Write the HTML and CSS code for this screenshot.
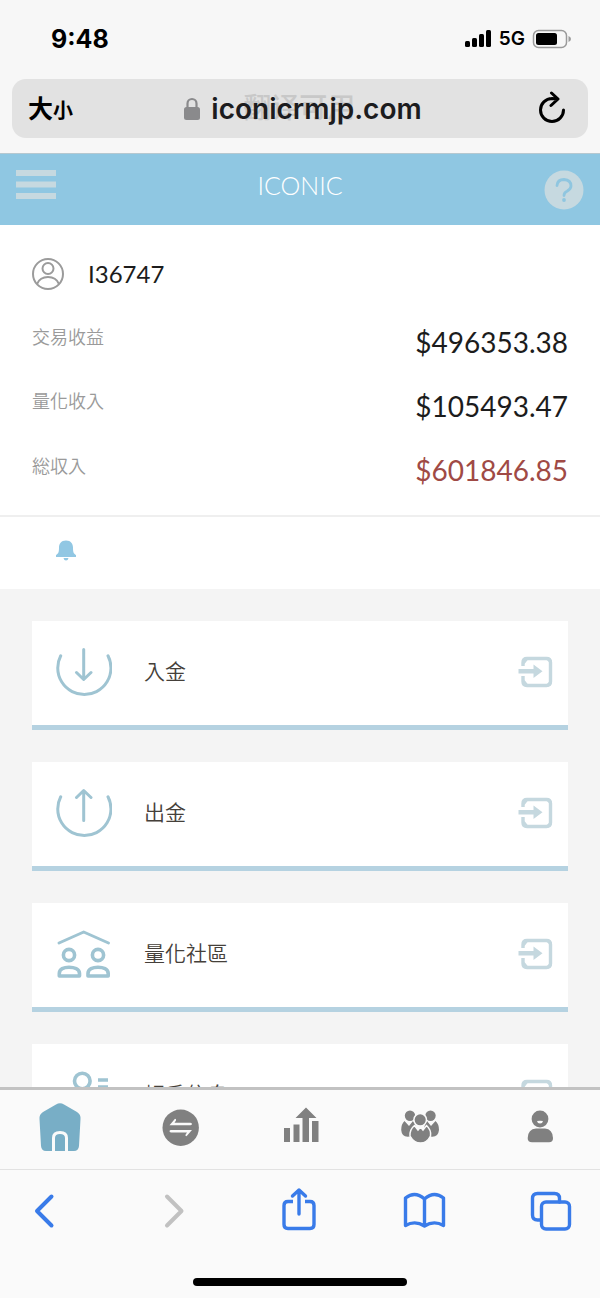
FILE: index.html
```html
<!DOCTYPE html>
<html lang="zh-Hant">
<head>
<meta charset="utf-8">
<meta name="viewport" content="width=device-width, initial-scale=1">
<title>ICONIC</title>
<link rel="stylesheet" href="styles.css">
</head>
<body>
<svg class="defs" aria-hidden="true">
  <symbol id="enter" viewBox="0 0 36 36">
    <path d="M6 11V7.500Q6 3.500 10 3.500H29.500Q33.500 3.500 33.500 7.500V26.500Q33.500 30.500 29.500 30.500H10Q6 30.500 6 26.500V21" fill="none" stroke="currentColor" stroke-width="3.400"/>
    <path d="M5.500 6L9 2H13L7.500 9ZM27 2H31L35 6V10ZM35 24V28L31 32H27ZM13 32H9L5 28L7.500 25Z" fill="currentColor"/>
    <path d="M1.500 14H16.500V9.500L25.500 16.300L16.500 23V18.400H1.500Z" fill="currentColor"/>
  </symbol>
</svg>
<div class="phone">
  <div class="status">
    <span class="clock">9:48</span>
    <div class="signals">
      <svg width="28" height="20" viewBox="0 0 28 20" aria-hidden="true"><rect x="1" y="12" width="5" height="6" rx="1.500"/><rect x="8" y="9" width="5" height="9" rx="1.500"/><rect x="15" y="5" width="5" height="13" rx="1.500"/><rect x="22" y="1" width="5" height="17" rx="1.500"/></svg>
      <span class="network">5G</span>
      <svg width="40" height="20" viewBox="0 0 40 20" aria-hidden="true"><rect x="1.500" y="1.500" width="33" height="17" rx="5" fill="none" stroke="#9a9a9a" stroke-width="1.500"/><rect x="4" y="4" width="21" height="12" rx="2.500"/><path d="M36.500 7Q39 8 39 10Q39 12 36.500 13Z" fill="#9a9a9a"/></svg>
    </div>
  </div>
  <div class="address">
    <button class="text-size" type="button"><span class="big">大</span><span class="small">小</span></button>
    <div class="site">
      <svg width="18" height="24" viewBox="0 0 18 24" aria-hidden="true"><rect x="1" y="10" width="16" height="13" rx="2.500" fill="#8a8a8c"/><path d="M4.500 11V6.500a4.500 4.500 0 0 1 9 0V11" fill="none" stroke="#8a8a8c" stroke-width="2.200"/></svg>
      <span class="domain">iconicrmjp.com<span class="ghost">翻译可用</span></span>
    </div>
    <button class="reload" type="button" aria-label="重新載入"><svg width="32" height="36" viewBox="0 0 32 36"><path d="M16 7.500A11.500 11.500 0 1 0 27.500 19M15.500 2L22 8L15 14.500M21 8L16 7.500" fill="none" stroke="#000" stroke-width="3" stroke-linecap="round" stroke-linejoin="round"/></svg></button>
  </div>

  <header class="app-bar">
    <button type="button" aria-label="選單"><svg width="40" height="30" viewBox="0 0 40 30"><path d="M0 3H40M0 14.500H40M0 26H40" stroke="#c6d9e0" stroke-width="6"/></svg></button>
    <h1>ICONIC</h1>
    <button class="help" type="button" aria-label="說明"><svg width="40" height="40" viewBox="0 0 40 40"><circle cx="20" cy="20" r="19.500" fill="#c6d9e0"/><path d="M13 15.500Q13.500 9.500 20 9.500Q27 10 27 16Q27 19 23 21.200Q20 22.500 20 25.500" fill="none" stroke="#8fc6e0" stroke-width="2.800" stroke-linecap="round"/><circle cx="20" cy="30" r="1.900" fill="#8fc6e0"/></svg></button>
  </header>

  <main>
    <section class="profile">
      <div class="user">
        <svg width="32" height="34" viewBox="0 0 32 34" fill="none" stroke="#9b9b9b" stroke-width="2" aria-hidden="true"><circle cx="16" cy="17" r="15"/><circle cx="16" cy="11.500" r="5.500"/><path d="M5 27Q8 20 16 20Q24 20 27 27"/></svg>
        <span>I36747</span>
      </div>
      <dl>
        <div class="row"><dt>交易收益</dt><dd>$496353.38</dd></div>
        <div class="row"><dt>量化收入</dt><dd>$105493.47</dd></div>
        <div class="row total"><dt lang="ja">総収入</dt><dd>$601846.85</dd></div>
      </dl>
    </section>
    <section class="notice">
      <svg width="20" height="22" viewBox="0 0 20 22" fill="#91c7e3" aria-label="通知"><path d="M10 0.500C15 0.500 17 4 17 7.500C17 12 17.500 13.500 20 15V17H0V15C2.500 13.500 3 12 3 7.500C3 4 5 0.500 10 0.500ZM7.500 18H12.500Q12 20.500 10 20.500Q8 20.500 7.500 18Z"/></svg>
    </section>
    <nav class="cards">
      <a class="card" href="#deposit">
        <svg class="pic" viewBox="0 0 56 56"><path d="M4.700 10.800A26.600 26.600 0 1 0 52 10.800M27.700 4.500V34M20.500 27.500L27.700 34.500L35 27.500"/></svg>
        <span>入金</span><svg class="enter"><use href="#enter"/></svg>
      </a>
      <a class="card" href="#withdraw">
        <svg class="pic" viewBox="0 0 56 56"><path d="M4.700 10.800A26.600 26.600 0 1 0 52 10.800M27.700 34.500V5M20.500 11.500L27.700 4.500L35 11.500"/></svg>
        <span>出金</span><svg class="enter"><use href="#enter"/></svg>
      </a>
      <a class="card" href="#community">
        <svg class="pic" viewBox="0 0 56 56"><path d="M3 16L27.700 5L52.500 16"/><g stroke-width="3.600"><circle cx="13" cy="28" r="5.600"/><circle cx="42" cy="28" r="5.600"/><path d="M3.300 49V46.500C3.300 42 8 40.200 13 40.200S23.500 42 23.500 46.500V49ZM32 49V46.500C32 42 37 40.200 42 40.200S52.200 42 52.200 46.500V49Z"/></g></svg>
        <span>量化社區</span><svg class="enter"><use href="#enter"/></svg>
      </a>
      <a class="card" href="#account">
        <svg class="pic" viewBox="0 0 56 56"><g stroke-width="3.600"><circle cx="26.300" cy="13" r="7.800"/><path d="M42 12H52M42 19H52M8 48V42Q8 30 26 30T45 42V48Z" stroke-linecap="butt"/></g></svg>
        <span>帳戶信息</span><svg class="enter"><use href="#enter"/></svg>
      </a>
    </nav>
  </main>

  <nav class="tabs">
    <a href="#home" aria-label="首頁"><svg viewBox="0 0 48 50"><path d="M20 2.500Q24 0 28 2.500L41 10Q45 12.500 44.500 17L43 44Q42.500 49 38 49H10Q5.500 49 5 44L3.500 17Q3 12.500 7 10Z" fill="#78aec6"/><path d="M17.500 50V36Q17.500 30.500 24 30.500T30.500 36V50" fill="none" stroke="#fafafa" stroke-width="3"/></svg></a>
    <a href="#exchange" aria-label="兌換"><svg viewBox="0 0 48 50"><circle cx="24.700" cy="25.700" r="18.200" fill="#808080"/><path d="M13.500 23.200L19 16.800Q20.500 17 20 18.500L18.500 20.800H34.500Q36 21 36 22T34.500 23.200ZM36 28L30.500 34.300Q29 34.200 29.500 32.800L31 30.500H15Q13.500 30.300 13.500 29.200T15 28Z" fill="#fafafa"/></svg></a>
    <a href="#stats" aria-label="統計"><svg viewBox="0 0 48 50" fill="#808080"><path d="M8 26H14V40H8ZM17.500 22.500H23.500V40H17.500ZM30 5.500L40.500 16H33V40H26.500V16H19.500ZM36 19H42.500V40H36Z"/></svg></a>
    <a href="#team" aria-label="團隊"><svg viewBox="0 0 48 50" fill="#808080"><circle cx="14" cy="13.700" r="5.200"/><circle cx="34.500" cy="13.700" r="5.200"/><path d="M8.500 19L13 24L17 19Q21 24 19 31L16 34Q6 37 5.200 28Q5.200 22 8.500 19ZM39.500 19L35 24L31 19Q27 24 29 31L32 34Q42 37 43 28Q43 22 39.500 19Z"/><g stroke="#fafafa" stroke-width="1.500"><circle cx="24.200" cy="17.800" r="6.300"/><path d="M18.500 23.500L22 28L24.500 25L27 28L30.500 23.500Q35.500 28 34.500 34Q31 41 24.500 41T14 34Q13.500 27.500 18.500 23.500Z"/></g></svg></a>
    <a href="#me" aria-label="我的"><svg viewBox="0 0 48 50" fill="#808080"><circle cx="24" cy="17" r="8.400"/><path d="M21 19Q24 18.300 27 19Q26.500 21.500 24 21.500T21 19Z" fill="#fafafa"/><path d="M11.700 36Q12 27 20 26.500H29Q36.500 27 37 36Q37 40.300 33 40.300H16Q11.700 40.300 11.700 36Z"/></svg></a>
  </nav>

  <footer class="toolbar">
    <button type="button" aria-label="上一頁"><svg viewBox="0 0 44 48"><path d="M29.500 9.500L15 24L29.500 38.500" stroke-width="4"/></svg></button>
    <button type="button" aria-label="下一頁" disabled><svg viewBox="0 0 44 48"><path d="M18 9.500L32.500 24L18 38.500" stroke-width="4"/></svg></button>
    <button type="button" aria-label="分享"><svg viewBox="0 0 44 48"><path d="M17 14.500H12Q8 14.500 8 18.500V37.500Q8 41.500 12 41.500H34Q38 41.500 38 37.500V18.500Q38 14.500 34 14.500H29" stroke-linecap="butt"/><path d="M23 27V3M16.500 9L23 3L29.500 9"/></svg></button>
    <button type="button" aria-label="書籤"><svg viewBox="0 0 44 48"><path d="M21.500 12Q12 3.500 2.500 11V38.500Q12 33 21.500 39Q31 33 40.500 38.500V11Q31 3.500 21.500 12V39"/></svg></button>
    <button type="button" aria-label="分頁"><svg viewBox="0 0 44 48"><path d="M11 33H7.500Q2.500 33 2.500 28V11.500Q2.500 6.500 7.500 6.500H24.500Q29.500 6.500 29.500 11.500V15"/><rect x="11.500" y="15" width="28" height="27" rx="4.500"/></svg></button>
  </footer>
  <div class="home-indicator"></div>
</div>
</body>
</html>
```
FILE: styles.css
```css
* { box-sizing: border-box; }
body { margin: 0; font-family: Lato, "Noto Sans CJK TC", sans-serif; }
button { margin: 0; padding: 0; border: 0; background: none; color: inherit; font: inherit; }
svg { display: block; flex: none; }
h1, dl, dd { margin: 0; }
a { color: inherit; text-decoration: none; }
.defs { position: absolute; width: 0; height: 0; }

.phone { display: flex; flex-direction: column; height: 100vh; overflow: hidden; background: #f7f7f7; }

.status { display: flex; flex: none; justify-content: space-between; align-items: center; height: 79px; padding: 0 28px 2px 51px; font-family: Inter, sans-serif; color: #000; }
.clock { font-size: 25px; font-weight: 700; }
.signals { display: flex; align-items: center; gap: 7px; }
.network { font-size: 19px; font-weight: 600; }

.address { display: flex; flex: none; align-items: center; justify-content: space-between; height: 59px; margin: 0 12px 15px; padding: 0 20px 0 16px; border-radius: 14px; background: #e2e2e2; }
.text-size { display: flex; align-items: baseline; font-family: "Noto Sans CJK SC", sans-serif; font-weight: 700; line-height: 32px; color: #000; }
.big { font-size: 25px; }
.small { font-size: 20px; }
.site { display: flex; align-items: center; gap: 10px; padding-right: 4px; font-family: Inter, "Noto Sans CJK SC", sans-serif; font-size: 28px; line-height: 36px; font-weight: 600; color: #1c1c1e; }
.domain { position: relative; z-index: 0; }
.ghost { position: absolute; z-index: -1; top: 0; left: 32px; font-size: 28px; line-height: 34px; font-weight: 500; white-space: nowrap; color: #c8c8c8; }

.app-bar { display: grid; flex: none; grid-template-columns: 40px 1fr 40px; height: 72px; padding: 16px; border-top: 1px solid #b6c8d0; background: #8fc7e2; }
.app-bar button { height: 30px; }
h1 { font-size: 25px; line-height: 31px; font-weight: 300; text-align: center; color: #fff; }

main { flex: 1; min-height: 0; overflow: hidden; background: #f4f4f4; }
.profile { padding: 16px 32px 12px; border-bottom: 2px solid #efefef; background: #fff; }
.user { display: flex; align-items: center; gap: 24px; height: 66px; margin-bottom: 4px; font-size: 24px; color: #1c1c1c; }
.user span { padding-bottom: 2px; }
.row { display: flex; justify-content: space-between; height: 64px; }
dt { font-size: 18px; line-height: 52px; font-weight: 350; color: #9a9a9a; }
dd { font-size: 28px; line-height: 62px; color: #1c1c1c; }
.total dt { font-family: "Noto Sans CJK JP", sans-serif; }
.total dd { color: #a04a45; }
.notice { display: flex; align-items: center; height: 72px; padding: 0 56px 4px; background: #fff; }

.cards { display: flex; flex-direction: column; gap: 32px; padding: 32px; }
.card { display: flex; flex: none; align-items: center; height: 109px; padding: 0 15px 0 24px; border-bottom: 5px solid #b5d2e1; background: #fff; font-size: 21px; font-weight: 350; color: #45403a; }
.card span { flex: 1; padding: 0 0 6px 32px; }
.pic { width: 56px; height: 56px; fill: none; stroke: #9fc4d2; stroke-width: 3; stroke-linecap: round; stroke-linejoin: round; }
.enter { width: 36px; height: 36px; color: #c5d8df; }

.tabs { display: flex; flex: none; height: 83px; padding-top: 12px; border-top: 3px solid #c2c2c2; border-bottom: 1px solid #e2e2e2; background: #fafafa; }
.tabs a { display: flex; flex: 1; justify-content: center; }
.tabs svg { width: 48px; height: 50px; }

.toolbar { display: flex; flex: none; justify-content: space-between; height: 108px; padding: 17px 26px 0 22px; background: #fafafa; }
.toolbar svg { width: 44px; height: 48px; fill: none; stroke: #397be9; stroke-width: 3.4; stroke-linecap: round; stroke-linejoin: round; }
.toolbar button { height: 48px; }
.toolbar button:disabled svg { stroke: #c1c1c1; }
.home-indicator { flex: none; height: 20px; background: #fafafa; }
.home-indicator::before { content: ""; display: block; width: 214px; height: 8px; margin: 0 auto; border-radius: 4px; background: #000; }
```
